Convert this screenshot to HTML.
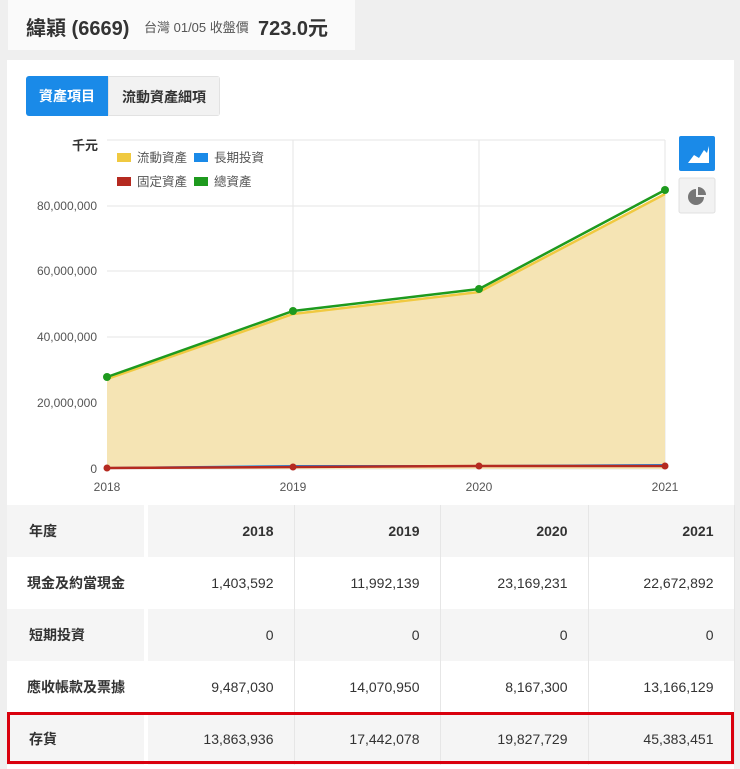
<!DOCTYPE html>
<html><head><meta charset="utf-8"><style>
body{margin:0;width:740px;height:769px;background:#efefef;font-family:"Liberation Sans","Noto Sans CJK TC",sans-serif;overflow:hidden;position:relative}
.hd{position:absolute;left:8px;top:0;width:347px;height:50px;background:#fafafa;}
.hd span{position:absolute;top:14px;white-space:nowrap}
.card{position:absolute;left:7px;top:60px;width:727px;height:709px;background:#fff}
.tabs{position:absolute;left:26px;top:76px;height:40px;display:flex;border-radius:3px;overflow:hidden;font-size:14px;font-weight:bold}
.tabs div{line-height:40px;padding:0 13px}
table{position:absolute;left:7px;top:505px;border-collapse:collapse;font-size:14px;color:#333;table-layout:fixed}
td{height:52px;padding:0;border-right:1px solid #e6e6e6;text-align:right;padding-right:20px;box-sizing:border-box;white-space:nowrap}
td:first-child{text-align:left;padding-left:22px;padding-right:0;font-weight:bold;border-right:4px solid #fff}
tr.g td{background:#f5f5f5}
tr.h td{font-weight:bold}
.red{position:absolute;left:7px;top:712px;width:727px;height:52px;border:3px solid #d9000d;box-sizing:border-box}
</style></head><body>
<div class="hd">
<span style="left:18px;top:12px;font-size:20px;font-weight:bold;color:#333">緯穎 (6669)</span>
<span style="left:136px;top:17px;font-size:13px;color:#555">台灣 01/05 收盤價</span>
<span style="left:250px;top:12px;font-size:20px;font-weight:bold;color:#333">723.0元</span>
</div>
<div class="card"></div>
<div class="tabs"><div style="background:#1a8ae8;color:#fff">資產項目</div><div style="background:#f2f2f2;color:#333;border:1px solid #e2e2e2">流動資產細項</div></div>
<svg style="position:absolute;left:0;top:0" width="740" height="505">
<g stroke="#e6e6e6" stroke-width="1">
<line x1="107" y1="140" x2="665" y2="140"/><line x1="107" y1="206" x2="665" y2="206"/><line x1="107" y1="271" x2="665" y2="271"/><line x1="107" y1="337" x2="665" y2="337"/><line x1="107" y1="403" x2="665" y2="403"/><line x1="107" y1="469" x2="665" y2="469"/>
<line x1="293" y1="140" x2="293" y2="469"/><line x1="479" y1="140" x2="479" y2="469"/><line x1="665" y1="140" x2="665" y2="469"/>
</g>
<path d="M107 379 L293 314 L479 292 L665 194 L665 469 L107 469Z" fill="#f5e4b4"/>
<polyline points="107,379 293,314 479,292 665,194" fill="none" stroke="#f0c940" stroke-width="2.5"/>
<polyline points="107,468 293,466 479,466 665,465" fill="none" stroke="#1a8ae8" stroke-width="2"/>
<polyline points="107,468 293,467 479,466 665,466" fill="none" stroke="#b52a20" stroke-width="2.5"/>
<g fill="#b52a20"><circle cx="107" cy="468" r="3.5"/><circle cx="293" cy="467" r="3.5"/><circle cx="479" cy="466" r="3.5"/><circle cx="665" cy="466" r="3.5"/></g>
<polyline points="107,377 293,311 479,289 665,190" fill="none" stroke="#1e9a1e" stroke-width="2.5"/>
<g fill="#1e9a1e"><circle cx="107" cy="377" r="4"/><circle cx="293" cy="311" r="4"/><circle cx="479" cy="289" r="4"/><circle cx="665" cy="190" r="4"/></g>
<g font-size="12" fill="#555" text-anchor="end">
<text x="97" y="210">80,000,000</text><text x="97" y="275">60,000,000</text><text x="97" y="341">40,000,000</text><text x="97" y="407">20,000,000</text><text x="97" y="473">0</text>
</g>
<g font-size="12" fill="#555" text-anchor="middle"><text x="107" y="491">2018</text><text x="293" y="491">2019</text><text x="479" y="491">2020</text><text x="665" y="491">2021</text></g>
<text x="98" y="150" font-size="13" font-weight="bold" fill="#333" text-anchor="end">千元</text>
<g font-size="12.5" fill="#555">
<rect x="117" y="153" width="14" height="9" fill="#f0c940"/><text x="137" y="162">流動資產</text>
<rect x="194" y="153" width="14" height="9" fill="#1a8ae8"/><text x="214" y="162">長期投資</text>
<rect x="117" y="177" width="14" height="9" fill="#b52a20"/><text x="137" y="186">固定資產</text>
<rect x="194" y="177" width="14" height="9" fill="#1e9a1e"/><text x="214" y="186">總資產</text>
</g>
<rect x="679" y="136" width="36" height="35" rx="2" fill="#1a8ae8"/>
<path d="M688 163 L694 155 L699 158 L704 150 L707 153 L709 146 L709 163Z" fill="#fff"/>
<rect x="679" y="178" width="36" height="35" rx="2" fill="#f2f2f2" stroke="#e0e0e0"/>
<path d="M696 189 A8 8 0 1 0 704 197 L696 197Z" fill="#777"/>
<path d="M698 187 A8 8 0 0 1 706 195 L698 195Z" fill="#777"/>
</svg>
<table>
<colgroup><col style="width:139px"><col style="width:148px"><col style="width:146px"><col style="width:148px"><col style="width:146px"></colgroup>
<tr class="g h"><td>年度</td><td>2018</td><td>2019</td><td>2020</td><td>2021</td></tr>
<tr><td style="padding-left:20px">現金及約當現金</td><td>1,403,592</td><td>11,992,139</td><td>23,169,231</td><td>22,672,892</td></tr>
<tr class="g"><td>短期投資</td><td>0</td><td>0</td><td>0</td><td>0</td></tr>
<tr><td style="padding-left:20px">應收帳款及票據</td><td>9,487,030</td><td>14,070,950</td><td>8,167,300</td><td>13,166,129</td></tr>
<tr class="g"><td>存貨</td><td>13,863,936</td><td>17,442,078</td><td>19,827,729</td><td>45,383,451</td></tr>
</table>
<div class="red"></div>
</body></html>
